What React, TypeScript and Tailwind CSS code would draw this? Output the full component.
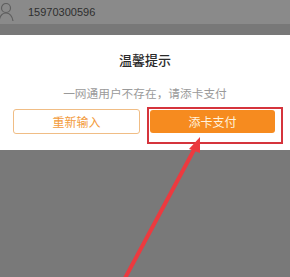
import React from "react";

export default function App() {
  const font = { fontFamily: '"Noto Sans CJK SC", "Liberation Sans", sans-serif' };
  return (
    <div className="relative w-[290px] h-[277px] overflow-hidden bg-[#797979]" style={font}>
      <div className="h-[24px] bg-[#8a8a8a] flex items-center">
        <svg width="16" height="20" viewBox="0 0 16 20" className="ml-[-2px]">
          <circle cx="8" cy="6" r="4.5" fill="none" stroke="#5e5e5e" strokeWidth="1.2" />
          <path d="M1 19 C2 13 5 11 8 11 C11 11 14 13 15 19" fill="none" stroke="#5e5e5e" strokeWidth="1.2" />
        </svg>
        <span className="ml-[14px] text-[11px] text-[#2e2e2e] leading-none" style={{ fontFamily: '"Liberation Sans", sans-serif' }}>15970300596</span>
      </div>
      <div className="h-[11px] bg-[#787878]" />
      <div className="bg-white h-[115px] flex flex-col items-center">
        <div className="mt-[17px] text-[13px] leading-[16px] font-medium text-[#2a2a2a]">温馨提示</div>
        <div className="mt-[18px] text-[11.7px] leading-[14px] text-[#9a9a9a]">一网通用户不存在，请添卡支付</div>
        <div className="mt-[9px] w-full flex px-[13px] gap-[10px]">
          <div className="w-[127px] h-[25px] rounded-[3px] border border-[#f0bd85] flex items-center justify-center text-[12px] text-[#f39b3b]">重新输入</div>
          <div className="w-[125px] h-[23px] mt-[1px] rounded-[3px] bg-[#f68b1f] flex items-center justify-center text-[12px] text-[#fff3df]">添卡支付</div>
        </div>
      </div>
      <div className="absolute left-[147px] top-[107px] w-[136px] h-[37px] border-2 border-[#d5343c]" />
      <svg className="absolute left-0 top-0" width="290" height="277" viewBox="0 0 290 277">
        <line x1="124" y1="280" x2="195" y2="148" stroke="#ec3a3f" strokeWidth="4" strokeLinecap="round" />
        <polygon points="200,137 189,149 200,153" fill="#ec3a3f" />
      </svg>
    </div>
  );
}
